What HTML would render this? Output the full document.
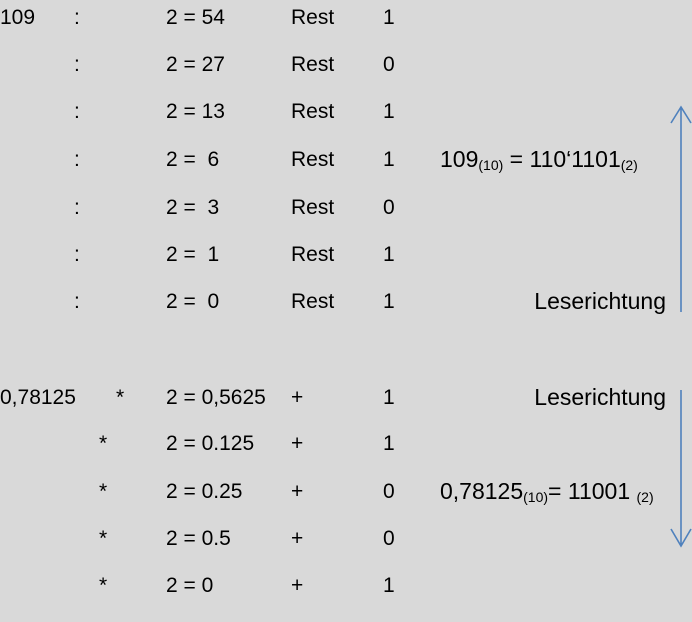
<!DOCTYPE html>
<html><head><meta charset="utf-8"><style>
body{margin:0;width:692px;height:622px;background:#d9d9d9;position:relative;overflow:hidden;font-family:"Liberation Sans",sans-serif;font-size:21px;color:#000}
.t{position:absolute;line-height:24px;white-space:pre}
.r{font-size:23px}
sub{font-size:14px;vertical-align:-3px}
</style></head><body>
<div class="t" style="left:0;top:6px">109</div>
<div class="t" style="left:0;top:386px">0,78125</div>

<div class="t" style="left:74px;top:6px">:</div>
<div class="t" style="left:74px;top:53px">:</div>
<div class="t" style="left:74px;top:100px">:</div>
<div class="t" style="left:74px;top:148px">:</div>
<div class="t" style="left:74px;top:196px">:</div>
<div class="t" style="left:74px;top:243px">:</div>
<div class="t" style="left:74px;top:290px">:</div>

<div class="t" style="left:166px;top:6px">2 = 54</div>
<div class="t" style="left:166px;top:53px">2 = 27</div>
<div class="t" style="left:166px;top:100px">2 = 13</div>
<div class="t" style="left:166px;top:148px">2 =  6</div>
<div class="t" style="left:166px;top:196px">2 =  3</div>
<div class="t" style="left:166px;top:243px">2 =  1</div>
<div class="t" style="left:166px;top:290px">2 =  0</div>

<div class="t" style="left:291px;top:6px">Rest</div>
<div class="t" style="left:291px;top:53px">Rest</div>
<div class="t" style="left:291px;top:100px">Rest</div>
<div class="t" style="left:291px;top:148px">Rest</div>
<div class="t" style="left:291px;top:196px">Rest</div>
<div class="t" style="left:291px;top:243px">Rest</div>
<div class="t" style="left:291px;top:290px">Rest</div>

<div class="t" style="left:383px;top:6px">1</div>
<div class="t" style="left:383px;top:53px">0</div>
<div class="t" style="left:383px;top:100px">1</div>
<div class="t" style="left:383px;top:148px">1</div>
<div class="t" style="left:383px;top:196px">0</div>
<div class="t" style="left:383px;top:243px">1</div>
<div class="t" style="left:383px;top:290px">1</div>

<div class="t r" style="left:440px;top:147px">109<sub>(10)</sub> = 110‘1101<sub>(2)</sub></div>
<div class="t r" style="right:26px;top:289px">Leserichtung</div>
<div class="t r" style="right:26px;top:385px">Leserichtung</div>
<div class="t r" style="left:440px;top:479px">0,78125<sub>(10)</sub>= 11001 <sub>(2)</sub></div>

<div class="t" style="left:116px;top:386px">*</div>
<div class="t" style="left:99px;top:432px">*</div>
<div class="t" style="left:99px;top:480px">*</div>
<div class="t" style="left:99px;top:527px">*</div>
<div class="t" style="left:99px;top:574px">*</div>

<div class="t" style="left:166px;top:386px">2 = 0,5625</div>
<div class="t" style="left:166px;top:432px">2 = 0.125</div>
<div class="t" style="left:166px;top:480px">2 = 0.25</div>
<div class="t" style="left:166px;top:527px">2 = 0.5</div>
<div class="t" style="left:166px;top:574px">2 = 0</div>

<div class="t" style="left:291px;top:386px">+</div>
<div class="t" style="left:291px;top:432px">+</div>
<div class="t" style="left:291px;top:480px">+</div>
<div class="t" style="left:291px;top:527px">+</div>
<div class="t" style="left:291px;top:574px">+</div>

<div class="t" style="left:383px;top:386px">1</div>
<div class="t" style="left:383px;top:432px">1</div>
<div class="t" style="left:383px;top:480px">0</div>
<div class="t" style="left:383px;top:527px">0</div>
<div class="t" style="left:383px;top:574px">1</div>

<svg style="position:absolute;left:0;top:0" width="692" height="622">
<g stroke="#4f81bd" stroke-width="1.6" fill="none">
<path d="M681 108 V312 M671 123 L681 107 L691 123"/>
<path d="M681 390 V545 M671 529 L681 546 L691 529"/>
</g></svg>
</body></html>
